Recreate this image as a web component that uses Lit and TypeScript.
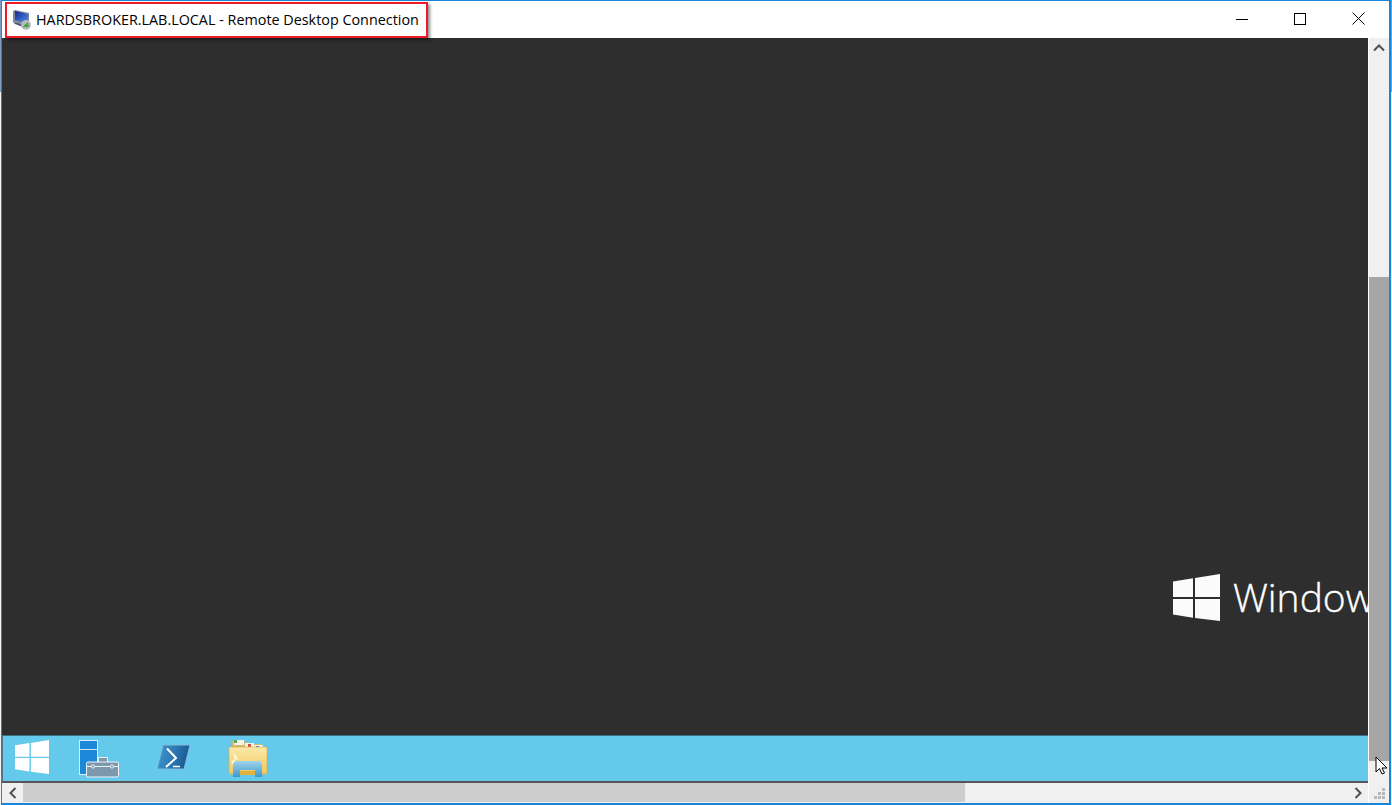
import { LitElement, html, css, svg } from "lit";
import { customElement } from "lit/decorators.js";

const winLogo = (fill: string) => svg`
  <polygon fill=${fill} points="0,7.4 20,4.3 20,23 0,23" />
  <polygon fill=${fill} points="22,4 47,0 47,23 22,23" />
  <polygon fill=${fill} points="0,25 20,25 20,43.7 0,40.6" />
  <polygon fill=${fill} points="22,25 47,25 47,47 22,44" />
`;

@customElement("app-root")
export class AppRoot extends LitElement {
  static styles = css`
    :host {
      display: block;
      width: 1392px;
      height: 805px;
      background: linear-gradient(#7f9fc2 92px, #f4f4f4 92px);
      overflow: hidden;
      position: relative;
    }
    .window {
      width: 1390px;
      height: 805px;
      margin-left: 1px;
      box-sizing: border-box;
      border: 2px solid #1a84d6;
      border-width: 1px 2px 2px 1px;
      background: #fff;
      display: flex;
      flex-direction: column;
    }
    .titlebar {
      height: 37px;
      flex: none;
      display: flex;
      align-items: center;
      background: #fff;
      padding-left: 10px;
      font: 14.37px "Open Sans", "Noto Sans", sans-serif;
      color: #000;
    }
    .app-icon {
      width: 20px;
      height: 20px;
      margin-right: 4px;
      flex: none;
    }
    .title {
      white-space: nowrap;
    }
    .controls {
      margin-left: auto;
      display: flex;
      align-items: center;
      padding-right: 24px;
      padding-bottom: 2px;
      gap: 46px;
    }
    .controls svg {
      display: block;
    }
    .body {
      flex: 1;
      min-height: 0;
      display: flex;
    }
    .main {
      flex: 1;
      min-width: 0;
      display: flex;
      flex-direction: column;
    }
    .view {
      flex: 1;
      min-height: 0;
      display: flex;
      flex-direction: column;
      overflow: hidden;
    }
    .desktop {
      flex: 1;
      min-height: 0;
      background: #2e2e2e;
      display: flex;
      align-items: flex-start;
      padding: 536px 0 0 1171px;
      gap: 13px;
      overflow: hidden;
    }
    .brand-text {
      font: 300 39px "Open Sans", sans-serif;
      line-height: 46px;
      color: #fff;
      -webkit-text-stroke: 0.35px #fff;
      white-space: nowrap;
    }
    .taskbar {
      height: 46px;
      flex: none;
      box-sizing: border-box;
      background: #64c9ea;
      border-top: 1px solid #3d6f80;
      border-left: 1px solid #4d7787;
      display: flex;
      align-items: flex-start;
      padding-top: 2px;
      padding-left: 12px;
    }
    .taskbar svg {
      display: block;
      flex: none;
    }
    .icon-win {
      margin-top: 2px;
    }
    .icon-server {
      margin: 2px 0 0 30px;
    }
    .icon-ps {
      margin: 6px 0 0 36px;
    }
    .icon-folder {
      margin-left: 36px;
    }
    .hscroll {
      border-top: 2px solid #565656;
      background: #f0f0f0;
      display: flex;
      align-items: stretch;
      height: 20px;
    }
    .hbtn {
      width: 21px;
      flex: none;
      display: flex;
      align-items: center;
      justify-content: center;
    }
    .hthumb {
      width: 942px;
      margin-bottom: 1px;
      background: #cdcdcd;
    }
    .hspacer {
      flex: 1;
    }
    .vscroll {
      width: 20px;
      flex: none;
      margin-left: 1px;
      background: #f0f0f0;
      display: flex;
      flex-direction: column;
    }
    .vbtn {
      height: 20px;
      flex: none;
      display: flex;
      align-items: center;
      justify-content: center;
    }
    .vtrack {
      height: 219px;
      flex: none;
    }
    .vthumb {
      height: 484px;
      flex: none;
      background: #a6a6a6;
    }
    .grip {
      height: 19px;
      margin-top: auto;
      position: relative;
    }
    .grip svg {
      position: absolute;
      right: 2px;
      bottom: 2px;
    }
    .annotation {
      position: absolute;
      left: 5px;
      top: 2px;
      width: 423px;
      height: 36px;
      box-sizing: border-box;
      border: 2px solid #ed1c24;
      box-shadow: 2px 2px 3px rgba(0, 0, 0, 0.45);
      pointer-events: none;
    }
    .cursor {
      position: absolute;
      left: 1375px;
      top: 756px;
    }
  `;

  render() {
    return html`
      <div class="window">
        <div class="titlebar">
          <svg class="app-icon" viewBox="0 0 20 20">
            <defs>
              <linearGradient id="scr" x1="0" y1="0" x2="1" y2="1">
                <stop offset="0" stop-color="#14278c" />
                <stop offset="1" stop-color="#4f8ff0" />
              </linearGradient>
            </defs>
            <polygon points="1,1 3,0 17,3 17,14 15,15 1,12" fill="#7f88a0" />
            <polygon points="3,1 16,4 16,13 3,10" fill="url(#scr)" />
            <polygon points="1,12 15,15 11,17 3,14" fill="#4a5268" />
            <circle cx="14" cy="15" r="5" fill="#b8bcc0" />
            <path d="M11.5 17 L16 13 M14 17 L17 15" stroke="#3e9a3a" stroke-width="1.6" fill="none" />
          </svg>
          <span class="title">HARDSBROKER.LAB.LOCAL - Remote Desktop Connection</span>
          <div class="controls">
            <svg width="12" height="12" viewBox="0 0 12 12">
              <path d="M0 6.5 H12" stroke="#000" stroke-width="1" />
            </svg>
            <svg width="12" height="12" viewBox="0 0 12 12">
              <rect x="0.5" y="0.5" width="11" height="11" fill="none" stroke="#000" stroke-width="1" />
            </svg>
            <svg width="13" height="13" viewBox="0 0 13 13">
              <path d="M0.5 0.5 L12.5 12.5 M12.5 0.5 L0.5 12.5" stroke="#000" stroke-width="1" />
            </svg>
          </div>
        </div>
        <div class="body">
          <div class="main">
            <div class="view">
              <div class="desktop">
                <svg width="47" height="47" viewBox="0 0 47 47" style="flex:none">
                  ${winLogo("#fbfbfb")}
                </svg>
                <span class="brand-text">Windows Server</span>
              </div>
              <div class="taskbar">
                <svg class="icon-win" width="34" height="34" viewBox="0 0 47 47">
                  ${winLogo("#fff")}
                </svg>
                <svg class="icon-server" width="41" height="40" viewBox="0 0 41 40">
                  <rect x="0.5" y="0.5" width="18" height="34" fill="#1e88d8" stroke="#d8eefa" />
                  <path d="M1 9.5 H18" stroke="#cfe8f8" />
                  <rect x="19.5" y="17.5" width="9" height="6" fill="#7d98aa" stroke="#e4eef4" />
                  <rect x="7.5" y="22" width="32" height="15" rx="1.5" fill="#7d98aa" stroke="#eef5fa" />
                  <path d="M8 26.5 H39" stroke="#eef5fa" />
                  <circle cx="14" cy="26.5" r="1.6" fill="#7d98aa" stroke="#eef5fa" />
                  <circle cx="33" cy="26.5" r="1.6" fill="#7d98aa" stroke="#eef5fa" />
                </svg>
                <svg class="icon-ps" width="36" height="28" viewBox="0 0 36 28">
                  <defs>
                    <linearGradient id="ps" x1="0" y1="0.4" x2="1" y2="0.6">
                      <stop offset="0" stop-color="#3f96cc" />
                      <stop offset="0.55" stop-color="#2a74b0" />
                      <stop offset="1" stop-color="#175488" />
                    </linearGradient>
                  </defs>
                  <polygon points="7,1 34,1 28,25 1,25" fill="url(#ps)" stroke="#7fbcdc" stroke-width="1" stroke-linejoin="round" />
                  <path d="M11 4.5 L20 14 L10 23" fill="none" stroke="#fff" stroke-width="2" />
                  <path d="M17 22.5 H24" stroke="#fff" stroke-width="1.5" />
                </svg>
                <svg class="icon-folder" width="40" height="40" viewBox="0 0 40 40">
                  <defs>
                    <linearGradient id="fold" x1="0" y1="0" x2="0" y2="1">
                      <stop offset="0" stop-color="#fbe9a8" />
                      <stop offset="1" stop-color="#f0c860" />
                    </linearGradient>
                    <linearGradient id="pane" x1="0" y1="0" x2="0" y2="1">
                      <stop offset="0" stop-color="#9fd4ea" />
                      <stop offset="1" stop-color="#3f98cc" />
                    </linearGradient>
                  </defs>
                  <path d="M4 3 H17 L19 6 H33 V14 H4 Z" fill="#d8b868" />
                  <rect x="6" y="2" width="10" height="5" fill="#f4f4ee" />
                  <rect x="6" y="2" width="3" height="3" fill="#5aa84a" />
                  <rect x="17" y="5" width="9" height="6" fill="#f4f4ee" />
                  <rect x="20" y="6" width="3" height="3" fill="#d84a3a" />
                  <rect x="26" y="7" width="9" height="5" fill="#f4f4ee" />
                  <rect x="28" y="8" width="3" height="3" fill="#2a78c8" />
                  <path d="M1 9 H38 Q39 9 39 10 V35 Q39 36 38 36 H3 Q1 36 1 34 Z" fill="url(#fold)" stroke="#d8ac50" stroke-width="0.7" />
                  <path d="M3 24 L9 19 L5 27 Z M5 14 L11 22 L6 20 Z" fill="#fff8dc" />
                  <path d="M5 39 V27 Q5 23 9 23 H30 Q34 23 34 27 V39 H27 V32 H12 V39 Z" fill="url(#pane)" />
                  <rect x="12" y="33" width="15" height="4" fill="#e0b040" />
                </svg>
              </div>
            </div>
            <div class="hscroll">
              <div class="hbtn">
                <svg width="8" height="12" viewBox="0 0 8 12">
                  <path d="M6.5 1 L1.5 6 L6.5 11" fill="none" stroke="#505050" stroke-width="2" />
                </svg>
              </div>
              <div class="hthumb"></div>
              <div class="hspacer"></div>
              <div class="hbtn">
                <svg width="8" height="12" viewBox="0 0 8 12">
                  <path d="M1.5 1 L6.5 6 L1.5 11" fill="none" stroke="#505050" stroke-width="2" />
                </svg>
              </div>
            </div>
          </div>
          <div class="vscroll">
            <div class="vbtn">
              <svg width="12" height="8" viewBox="0 0 12 8">
                <path d="M1 6.5 L6 1.5 L11 6.5" fill="none" stroke="#505050" stroke-width="2" />
              </svg>
            </div>
            <div class="vtrack"></div>
            <div class="vthumb"></div>
            <div class="grip">
              <svg width="14" height="14" viewBox="0 0 14 14">
                <g fill="#b8b8b8">
                  <rect x="9" y="1" width="3" height="3" />
                  <rect x="5" y="5" width="3" height="3" />
                  <rect x="9" y="5" width="3" height="3" />
                  <rect x="1" y="9" width="3" height="3" />
                  <rect x="5" y="9" width="3" height="3" />
                  <rect x="9" y="9" width="3" height="3" />
                </g>
              </svg>
            </div>
          </div>
        </div>
      </div>
      <div class="annotation"></div>
      <svg class="cursor" width="14" height="22" viewBox="0 0 14 22">
        <path d="M1 1 V16 L4.5 12.5 L7 18 L9.5 17 L7 12 H12 Z" fill="#fff" stroke="#000" stroke-width="1" />
      </svg>
    `;
  }
}
